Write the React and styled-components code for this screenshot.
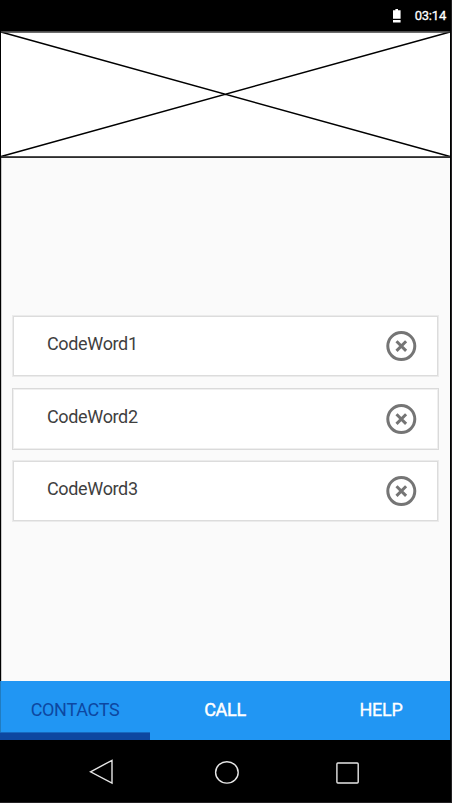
import React from "react";
import styled, { createGlobalStyle } from "styled-components";

const GlobalStyle = createGlobalStyle`
  * { box-sizing: border-box; }
  body { margin: 0; background: #000; font-family: Roboto, sans-serif; }
`;

const Phone = styled.div`
  width: 452px;
  height: 803px;
  display: flex;
  flex-direction: column;
  background: #000;
  border-right: 1px solid #242224;
  border-bottom: 1px solid #242224;
  overflow: hidden;
`;

const StatusBar = styled.header`
  height: 31px;
  flex: none;
  display: flex;
  justify-content: flex-end;
  align-items: flex-start;
  padding: 8px 5px 0 0;
  color: #fff;
`;

const BatteryIcon = styled.svg`
  width: 10px;
  height: 16px;
  margin-right: 13px;
`;

const Clock = styled.time`
  font-size: 13px;
  line-height: 16px;
  font-weight: 400;
  letter-spacing: -0.2px;
  -webkit-text-stroke: 0.3px #fff;
`;

const Banner = styled.svg`
  display: block;
  width: 451px;
  height: 127px;
  flex: none;
`;

const Content = styled.main`
  height: 523px;
  flex: none;
  margin: 0 1px;
  padding: 157px 11px 0;
  border-left: 1px solid #c9c9c9;
  background: #fafafa;
`;

const WordRow = styled.div`
  width: 427px;
  height: 62px;
  margin: 0 0 ${(p) => p.$gap}px -1px;
  padding-left: 34px;
  padding-right: 21px;
  display: flex;
  justify-content: space-between;
  background: #fff;
  border: 1px solid ${(p) => (p.$crisp ? "#dadada" : "#ebebeb")};
  box-shadow: inset 0 0 0 1px ${(p) => (p.$crisp ? "#efefef" : "#dcdcdc")};
`;

const Word = styled.span`
  padding-top: 17px;
  font-size: 18px;
  line-height: 22px;
  letter-spacing: -0.35px;
  color: #3f3f3f;
`;

const RemoveButton = styled.button`
  width: 32px;
  height: 32px;
  margin: ${(p) => p.$top}px 0 0;
  padding: 0;
  border: 0;
  background: none;
  svg { display: block; }
`;

const Tabs = styled.nav`
  height: 59px;
  flex: none;
  width: 450px;
  display: grid;
  grid-template-columns: 150px 150px 150px;
  background: #2196f3;
  box-shadow: inset 1px 0 0 #217cc0;
`;

const Tab = styled.button`
  margin: 0;
  padding: 17px 0 0 ${(p) => p.$shift || 0}px;
  border: 0;
  display: flex;
  justify-content: center;
  background: none;
  color: ${(p) => (p.$active ? "#0d47a1" : "#fff")};
  font: 400 18px/24px Roboto, sans-serif;
  letter-spacing: -0.3px;
  -webkit-text-stroke: ${(p) => p.$stroke || 0}px #fff;
  box-shadow: ${(p) =>
    p.$active ? "inset 0 -7px 0 #0d47a1, inset 0 -8px 0 #1768bf" : "none"};
`;

const SystemBar = styled.footer`
  flex: 1;
  display: flex;
  justify-content: flex-start;
  svg { display: block; }
`;

const words = [
  { label: "CodeWord1", gap: 11, crisp: false, iconTop: 14 },
  { label: "CodeWord2", gap: 10, crisp: true, iconTop: 14 },
  { label: "CodeWord3", gap: 0, crisp: false, iconTop: 14 },
];

export default function App() {
  return (
    <>
      <GlobalStyle />
      <Phone>
        <StatusBar>
          <BatteryIcon viewBox="0 0 10 16">
            <path d="M3.4 1h2.6v1.2h2.6v8.6H1V2.2h2.4zM1 12h7.6v2.4H1z" fill="#fff" />
          </BatteryIcon>
          <Clock>03:14</Clock>
        </StatusBar>
        <Banner viewBox="0 0 451 127">
          <path d="M1 .5H450V125.5H1z" fill="#fff" />
          <path d="M1 1L450 125.5M1 125.5L450 1" stroke="#000" strokeWidth="1.4" />
          <path d="M1 1H450M1 126H450" stroke="#3c3c3c" strokeWidth="1.4" />
        </Banner>
        <Content>
          {words.map((w) => (
            <WordRow key={w.label} $gap={w.gap} $crisp={w.crisp}>
              <Word>{w.label}</Word>
              <RemoveButton $top={w.iconTop} aria-label={`Remove ${w.label}`}>
                <svg width="32" height="32" viewBox="0 0 32 32" fill="none" stroke="#757575" strokeWidth="3">
                  <circle cx="16.3" cy="16.1" r="13.5" />
                  <path d="M11.5 11.3L21.1 20.9M21.1 11.3L11.5 20.9" />
                </svg>
              </RemoveButton>
            </WordRow>
          ))}
        </Content>
        <Tabs>
          <Tab $active>CONTACTS</Tab>
          <Tab $stroke={0.45}>CALL</Tab>
          <Tab $stroke={0.3} $shift={12}>HELP</Tab>
        </Tabs>
        <SystemBar>
          <svg width="451" height="62" viewBox="0 0 451 62" fill="none" stroke="#e6e6e6" strokeWidth="1.4">
            <path d="M90.5 31.8L112 20.3V43.2z" />
            <ellipse cx="226.9" cy="32.4" rx="11.3" ry="10.7" />
            <rect x="336.9" y="23" width="21.3" height="20" rx="1" />
          </svg>
        </SystemBar>
      </Phone>
    </>
  );
}
